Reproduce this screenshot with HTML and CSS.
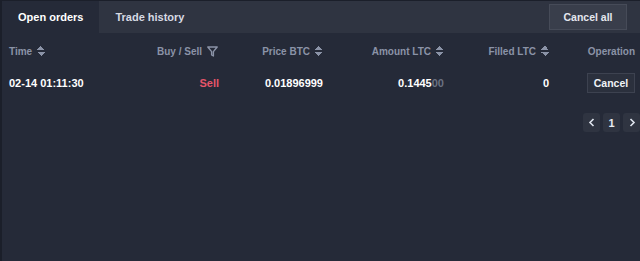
FILE: index.html
```html
<!DOCTYPE html>
<html lang="en">
<head>
    <meta charset="UTF-8">
    <title>Orders</title>
    <link rel="stylesheet" href="styles.css">
</head>
<body>
<div id="panel">
    <div class="tabBar">
        <div class="tab active">Open orders</div>
        <div class="tab">Trade history</div>
        <div class="cancelAll">Cancel all</div>
    </div>
    <div class="row head">
        <div class="cell c1">Time <span class="sort"></span></div>
        <div class="cell c2">Buy / Sell
            <svg class="filter" width="11" height="11" viewBox="0 0 11 11"><path d="M0.8 1h9.4L6.4 5.6V10L4.6 9V5.6z" fill="none" stroke="#8b93a7" stroke-width="1.4" stroke-linejoin="round"/></svg>
        </div>
        <div class="cell c3">Price BTC <span class="sort"></span></div>
        <div class="cell c4">Amount LTC <span class="sort"></span></div>
        <div class="cell c5">Filled LTC <span class="sort"></span></div>
        <div class="cell c6">Operation</div>
    </div>
    <div class="row data">
        <div class="cell c1">02-14 01:11:30</div>
        <div class="cell c2 sell">Sell</div>
        <div class="cell c3">0.01896999</div>
        <div class="cell c4"><span>0.1445<span class="zero">00</span></span></div>
        <div class="cell c5">0</div>
        <div class="cell c6"><span class="btn">Cancel</span></div>
    </div>
    <div class="pager">
        <span class="pg">
            <svg width="8" height="9" viewBox="0 0 8 9"><path d="M5.5 1L2 4.5L5.5 8" fill="none" stroke="#dfe4ee" stroke-width="1.6"/></svg>
        </span>
        <span class="pg">1</span>
        <span class="pg">
            <svg width="8" height="9" viewBox="0 0 8 9"><path d="M2.5 1L6 4.5L2.5 8" fill="none" stroke="#dfe4ee" stroke-width="1.6"/></svg>
        </span>
    </div>
</div>
</body>
</html>
```

FILE: styles.css
```css
html, body {
    margin: 0;
    padding: 0;
    background: #252a38;
}
* {
    box-sizing: border-box;
}
#panel {
    width: 640px;
    height: 261px;
    border-top: 1px solid #1b1f2a;
    border-left: 2px solid #1b1f2a;
    background: #252a38;
    font: bold 11px "Liberation Sans", Arial, sans-serif;
    color: #fff;
    overflow: hidden;
}
.tabBar {
    display: flex;
    align-items: center;
    height: 32px;
    background: #2f3441;
}
.tab {
    height: 32px;
    line-height: 32px;
    padding: 0 16px;
    white-space: nowrap;
    color: #d6dae3;
}
.tab.active {
    background: #252a38;
    color: #fff;
}
.cancelAll {
    margin-left: auto;
    margin-right: 13px;
    width: 78px;
    height: 26px;
    line-height: 24px;
    text-align: center;
    font-size: 10.5px;
    background: #393e4b;
    border: 1px solid #464b58;
    color: #e4e7ee;
}
.row {
    display: flex;
    align-items: center;
}
.head {
    height: 36px;
    color: #8b93a7;
    font-size: 10px;
}
.data {
    height: 28px;
}
.cell {
    display: flex;
    align-items: center;
    justify-content: flex-end;
    gap: 5px;
    white-space: nowrap;
}
.c1 { width: 117px; justify-content: flex-start; padding-left: 7px; }
.c2 { width: 100px; }
.c3 { width: 104px; }
.c4 { width: 121px; }
.c5 { width: 105px; }
.c6 { width: 86px; }
.head .c2 { padding-right: 1px; }
.sort {
    display: inline-block;
    width: 8px;
    height: 10px;
    background:
        linear-gradient(to bottom right, transparent 50%, #8b93a7 50%) 0 0 / 4px 4px no-repeat,
        linear-gradient(to bottom left, transparent 50%, #8b93a7 50%) 4px 0 / 4px 4px no-repeat,
        linear-gradient(to top right, transparent 50%, #8b93a7 50%) 0 6px / 4px 4px no-repeat,
        linear-gradient(to top left, transparent 50%, #8b93a7 50%) 4px 6px / 4px 4px no-repeat;
}
.sell { color: #e5556a; }
.zero { color: #6b7282; }
.btn {
    display: inline-block;
    width: 48px;
    height: 20px;
    line-height: 18px;
    text-align: center;
    font-size: 10.5px;
    background: #2b303d;
    border: 1px solid #3d4250;
    color: #f0f2f6;
}
.pager {
    display: flex;
    justify-content: flex-end;
    gap: 3px;
    margin-top: 16px;
}
.pg {
    display: flex;
    align-items: center;
    justify-content: center;
    width: 17px;
    height: 19px;
    border-radius: 3px;
    background: #2f3441;
    color: #e8ebf1;
}
```
